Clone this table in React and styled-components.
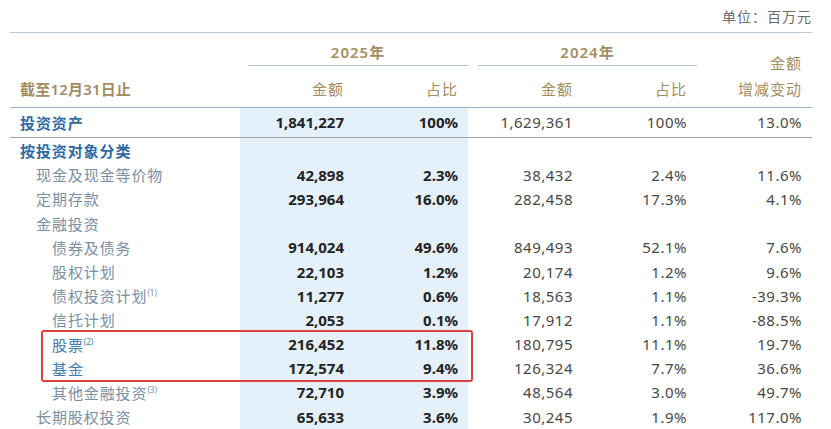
import React from "react";
import styled, { createGlobalStyle } from "styled-components";

const GlobalStyle = createGlobalStyle`
  body {
    margin: 0;
    background: #ffffff;
    font-family: "Noto Sans", "Noto Sans CJK SC", sans-serif;
  }
`;

const COLS = "230px 114px 114px 115px 114px 115px";

const rows = [
  { label: "按投资对象分类", level: 0, group: true },
  { label: "现金及现金等价物", level: 1, v: ["42,898", "2.3%", "38,432", "2.4%", "11.6%"] },
  { label: "定期存款", level: 1, v: ["293,964", "16.0%", "282,458", "17.3%", "4.1%"] },
  { label: "金融投资", level: 1 },
  { label: "债券及债务", level: 2, v: ["914,024", "49.6%", "849,493", "52.1%", "7.6%"] },
  { label: "股权计划", level: 2, v: ["22,103", "1.2%", "20,174", "1.2%", "9.6%"] },
  { label: "债权投资计划", note: "(1)", level: 2, v: ["11,277", "0.6%", "18,563", "1.1%", "-39.3%"] },
  { label: "信托计划", level: 2, v: ["2,053", "0.1%", "17,912", "1.1%", "-88.5%"] },
  { label: "股票", note: "(2)", level: 2, hot: true, v: ["216,452", "11.8%", "180,795", "11.1%", "19.7%"] },
  { label: "基金", level: 2, hot: true, v: ["172,574", "9.4%", "126,324", "7.7%", "36.6%"] },
  { label: "其他金融投资", note: "(3)", level: 2, v: ["72,710", "3.9%", "48,564", "3.0%", "49.7%"] },
  { label: "长期股权投资", level: 1, v: ["65,633", "3.6%", "30,245", "1.9%", "117.0%"] },
];

const Page = styled.div`
  width: 802px;
  padding: 0 19px 0 10px;
`;

const Unit = styled.div`
  height: 32px;
  line-height: 34px;
  text-align: right;
  font-size: 14px;
  letter-spacing: 1px;
  color: #6b6b6b;
  border-bottom: 1.5px solid #b7c8d9;
`;

const Head = styled.div`
  display: grid;
  grid-template-columns: ${COLS};
  grid-template-rows: 33px 41px;
  border-bottom: 1.5px solid #93b1cc;
  color: #a48c5f;
  font-size: 15px;
  letter-spacing: 1px;
`;

const YearCell = styled.div`
  grid-row: 1;
  grid-column: ${(p) => p.$col} / span 2;
  margin-left: ${(p) => p.$inset}px;
  border-bottom: 1.5px solid #b9c2cc;
  text-align: center;
  line-height: 38px;
  font-weight: 600;
`;

const HeadCell = styled.div`
  grid-row: 2;
  display: flex;
  align-items: center;
  justify-content: ${(p) => (p.$left ? "flex-start" : "flex-end")};
  padding: ${(p) => (p.$left ? "4px 0 0 10px" : "4px 10px 0 0")};
  font-weight: ${(p) => (p.$left ? 600 : 400)};
  letter-spacing: ${(p) => (p.$left ? "0.2px" : "1px")};
`;

const ChangeHead = styled.div`
  grid-row: 1 / span 2;
  grid-column: 6;
  display: flex;
  flex-direction: column;
  align-items: flex-end;
  justify-content: flex-end;
  padding: 0 10px 5px 0;
  line-height: 26px;
`;

const Body = styled.div`
  background: linear-gradient(
    to right,
    transparent 230px,
    #e4f1fb 230px,
    #e4f1fb 458px,
    transparent 458px
  );
  padding-bottom: 2px;
`;

const Row = styled.div`
  display: grid;
  grid-template-columns: ${COLS};
  height: ${(p) => (p.$total ? "28.5px" : "24.2px")};
  align-items: center;
  font-size: 15px;
  border-bottom: ${(p) => (p.$total ? "1.5px solid #a3a3a3" : "none")};
  margin-bottom: ${(p) => (p.$total ? "1px" : "0")};
`;

const Label = styled.div`
  padding-left: ${(p) => 10 + p.$level * 16}px;
  letter-spacing: 0.9px;
  white-space: nowrap;
  font-weight: ${(p) => (p.$strong ? 600 : 400)};
  color: ${(p) => (p.$strong ? "#2d6aa3" : p.$hot ? "#3f7ab6" : "#7a8ea4")};
`;

const Note = styled.sup`
  font-size: 8px;
  letter-spacing: 0;
  vertical-align: 6px;
  line-height: 0;
`;

const Num = styled.div`
  text-align: right;
  padding-right: 10px;
  font-weight: ${(p) => (p.$bold ? 700 : 400)};
  color: ${(p) => (p.$bold ? "#232323" : "#474747")};
  letter-spacing: ${(p) => (p.$bold ? "0" : "0.5px")};
`;

const HotGroup = styled.div`
  position: relative;

  &::after {
    content: "";
    position: absolute;
    left: 31px;
    width: 428px;
    top: -2px;
    bottom: -2px;
    border: 2px solid #d8423f;
    border-radius: 3px;
    pointer-events: none;
  }
`;

const DataRow = ({ r }) => (
  <Row>
    <Label $level={r.level} $strong={r.group} $hot={r.hot}>
      {r.label}
      {r.note && <Note>{r.note}</Note>}
    </Label>
    {r.v &&
      r.v.map((x, i) => (
        <Num key={i} $bold={i < 2}>
          {x}
        </Num>
      ))}
  </Row>
);

export default function App() {
  const before = rows.slice(0, 8);
  const hot = rows.filter((r) => r.hot);
  const after = rows.slice(10);

  return (
    <Page>
      <GlobalStyle />
      <Unit>单位：百万元</Unit>
      <Head>
        <YearCell $col={2} $inset={8}>2025年</YearCell>
        <YearCell $col={4} $inset={10}>2024年</YearCell>
        <ChangeHead>
          <span>金额</span>
          <span>增减变动</span>
        </ChangeHead>
        <HeadCell $left>截至12月31日止</HeadCell>
        <HeadCell>金额</HeadCell>
        <HeadCell>占比</HeadCell>
        <HeadCell>金额</HeadCell>
        <HeadCell>占比</HeadCell>
      </Head>
      <Body>
        <Row $total>
          <Label $level={0} $strong>
            投资资产
          </Label>
          <Num $bold>1,841,227</Num>
          <Num $bold>100%</Num>
          <Num>1,629,361</Num>
          <Num>100%</Num>
          <Num>13.0%</Num>
        </Row>
        {before.map((r) => (
          <DataRow key={r.label} r={r} />
        ))}
        <HotGroup>
          {hot.map((r) => (
            <DataRow key={r.label} r={r} />
          ))}
        </HotGroup>
        {after.map((r) => (
          <DataRow key={r.label} r={r} />
        ))}
      </Body>
    </Page>
  );
}
